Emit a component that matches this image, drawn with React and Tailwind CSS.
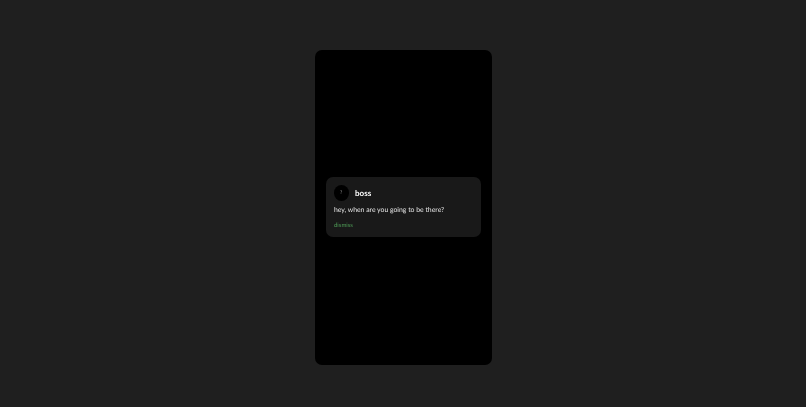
export default function App() {
  return (
    <div className="h-[407px] bg-[#1f1f1f] flex justify-center pt-[50px] font-['Lato',sans-serif] [text-rendering:geometricPrecision]">
      <div className="w-[177px] h-[315px] bg-black rounded-[7px] flex items-center justify-center">
        <div className="w-[155px] h-[60px] -mt-[1px] bg-[#191919] rounded-[7px] px-2 pt-2">
          <div className="flex items-center gap-[6px] h-[16px]">
            <div className="w-[15.5px] h-[15.5px] rounded-full bg-black flex items-center justify-center">
              <span className="text-[5px] leading-[5px] text-[#9a9a9a] [will-change:transform]">?</span>
            </div>
            <span className="text-[8px] leading-none font-bold text-white [will-change:transform]">boss</span>
          </div>
          <p className="text-[6.85px] leading-[11px] text-[#e6e6e6] mt-[3.5px] [will-change:transform]">hey, when are you going to be there?</p>
          <p className="text-[6px] leading-[8px] text-[#4f9d57] mt-[6.5px] [will-change:transform]">dismiss</p>
        </div>
      </div>
    </div>
  );
}
